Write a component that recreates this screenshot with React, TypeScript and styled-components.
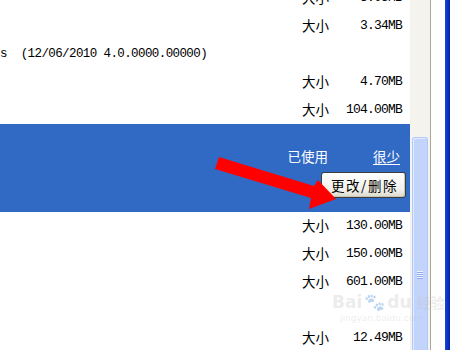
import React from "react";
import styled, { createGlobalStyle } from "styled-components";

const Global = createGlobalStyle`
  html, body { margin: 0; padding: 0; background: #ffffff; overflow: hidden; }
  body { width: 450px; height: 350px; }
`;

const Frame = styled.div`
  position: relative;
  width: 450px;
  height: 350px;
  display: flex;
  overflow: hidden;
  background: #ffffff;
`;

const List = styled.div`
  width: 410px;
  display: flex;
  flex-direction: column;
  margin-top: -16px;
  font-family: "Noto Sans CJK SC", sans-serif;
  color: #000;
`;

const Row = styled.div`
  height: 28px;
  flex: none;
  display: flex;
  align-items: center;
  justify-content: flex-end;
  padding-right: 9px;
`;

const InfoRow = styled.div`
  height: 28px;
  flex: none;
  display: flex;
  align-items: center;
  white-space: pre;
  font-family: "Liberation Mono", monospace;
  font-size: 12.5px;
  letter-spacing: -0.6px;
  padding-left: 0px;
`;

const SizeCell = styled.div`
  width: 99px;
  display: flex;
  align-items: center;
  justify-content: space-between;
`;

const Label = styled.span`
  font-family: "Noto Sans CJK SC", sans-serif;
  font-size: 13.5px;
  line-height: 16px;
  margin-top: -3px;
`;

const Value = styled.span`
  font-family: "Liberation Mono", monospace;
  font-size: 13px;
  letter-spacing: -0.8px;
  margin-right: -1px;
  line-height: 16px;
  margin-top: -1px;
`;

const Selected = styled.div`
  height: 88px;
  flex: none;
  background: #316ac5;
  display: flex;
  flex-direction: column;
  align-items: flex-end;
  padding: 24px 4px 0 0;
  box-sizing: border-box;
`;

const UsageLine = styled.div`
  display: flex;
  align-items: center;
  gap: 45px;
  padding-right: 6px;
  color: #ffffff;
  font-size: 13.5px;
  line-height: 16px;
`;

const Link = styled.span`
  text-decoration: underline;
  text-underline-offset: 2px;
`;

const Button = styled.button`
  margin-top: 8px;
  width: 85px;
  height: 26px;
  border: 1px solid #3c3c3c;
  border-radius: 3px;
  background: linear-gradient(#ffffff, #f1f0ea 70%, #dcd8cb);
  box-shadow: inset -1px -1px 0 #c9c5b4;
  font-family: "Noto Sans CJK SC", sans-serif;
  font-size: 13.5px;
  letter-spacing: 1.5px;
  color: #000;
  padding: 0 0 1px 2px;
  display: flex;
  align-items: center;
  justify-content: center;
`;

const Scrollbar = styled.div`
  width: 20px;
  flex: none;
  background: #f4f3ee;
  display: flex;
  flex-direction: column;
  padding-top: 137px;
  box-sizing: border-box;
`;

const Thumb = styled.div`
  margin: 0 2px 0 2px;
  flex: 1;
  background: #c3d4fc;
  border: 1px solid #b3c8fa;
  border-bottom: none;
  border-radius: 3px 3px 0 0;
  box-shadow: inset 1px 1px 0 #e3ebfe;
  display: flex;
  flex-direction: column;
  align-items: center;
  padding-top: 133px;
`;

const GripLine = styled.div`
  width: 6px;
  height: 1px;
  background: #eef3fe;
  margin-bottom: 1px;
  box-shadow: 0 1px 0 #8faaf0;
`;

const Divider = styled.div`
  width: 1px;
  flex: none;
  background: #aca899;
`;

const Gap = styled.div`
  width: 14px;
  flex: none;
  background: #ffffff;
`;

const WindowEdge = styled.div`
  flex: 1;
  background: linear-gradient(90deg, #1447d8, #0a2fc0 60%, #0520a0);
`;

const Watermark = styled.div`
  position: absolute;
  left: 332px;
  top: 292px;
  color: rgba(190, 190, 190, 0.28);
  font-family: "DejaVu Sans", sans-serif;
  pointer-events: none;
  display: flex;
  flex-direction: column;
`;

const MarkTop = styled.div`
  display: flex;
  align-items: center;
  font-size: 17px;
  font-weight: bold;
  line-height: 20px;
  gap: 2px;
`;

const MarkCn = styled.span`
  font-family: "Noto Sans CJK SC", sans-serif;
  font-size: 14px;
  margin-left: 3px;
`;

const MarkUrl = styled.div`
  font-size: 9px;
  line-height: 12px;
  padding-left: 8px;
`;

const ArrowLayer = styled.svg`
  position: absolute;
  left: 0;
  top: 0;
  pointer-events: none;
`;

const Size = ({ v }: { v: string }) => (
  <Row>
    <SizeCell>
      <Label>大小</Label>
      <Value>{v}</Value>
    </SizeCell>
  </Row>
);

export default function App() {
  return (
    <>
      <Global />
      <Frame>
        <List>
          <Size v="3.05MB" />
          <Size v="3.34MB" />
          <InfoRow>{"s  (12/06/2010 4.0.0000.00000)"}</InfoRow>
          <Size v="4.70MB" />
          <Size v="104.00MB" />
          <Selected>
            <UsageLine>
              <span>已使用</span>
              <Link>很少</Link>
            </UsageLine>
            <Button>更改/删除</Button>
          </Selected>
          <Size v="130.00MB" />
          <Size v="150.00MB" />
          <Size v="601.00MB" />
          <Row />
          <Size v="12.49MB" />
        </List>
        <Scrollbar>
          <Thumb>
            <GripLine />
            <GripLine />
            <GripLine />
            <GripLine />
          </Thumb>
        </Scrollbar>
        <Divider />
        <Gap />
        <WindowEdge />
        <Watermark>
          <MarkTop>
            <span>Bai</span>
            <span>🐾</span>
            <span>du</span>
            <MarkCn>经验</MarkCn>
          </MarkTop>
          <MarkUrl>jingyan.baidu.com</MarkUrl>
        </Watermark>
        <ArrowLayer width="450" height="350" viewBox="0 0 450 350">
          <polygon
            points="219,157 314,186 318,180 336,199 309,209 311,198 215,169"
            fill="#ff0000"
          />
        </ArrowLayer>
      </Frame>
    </>
  );
}
